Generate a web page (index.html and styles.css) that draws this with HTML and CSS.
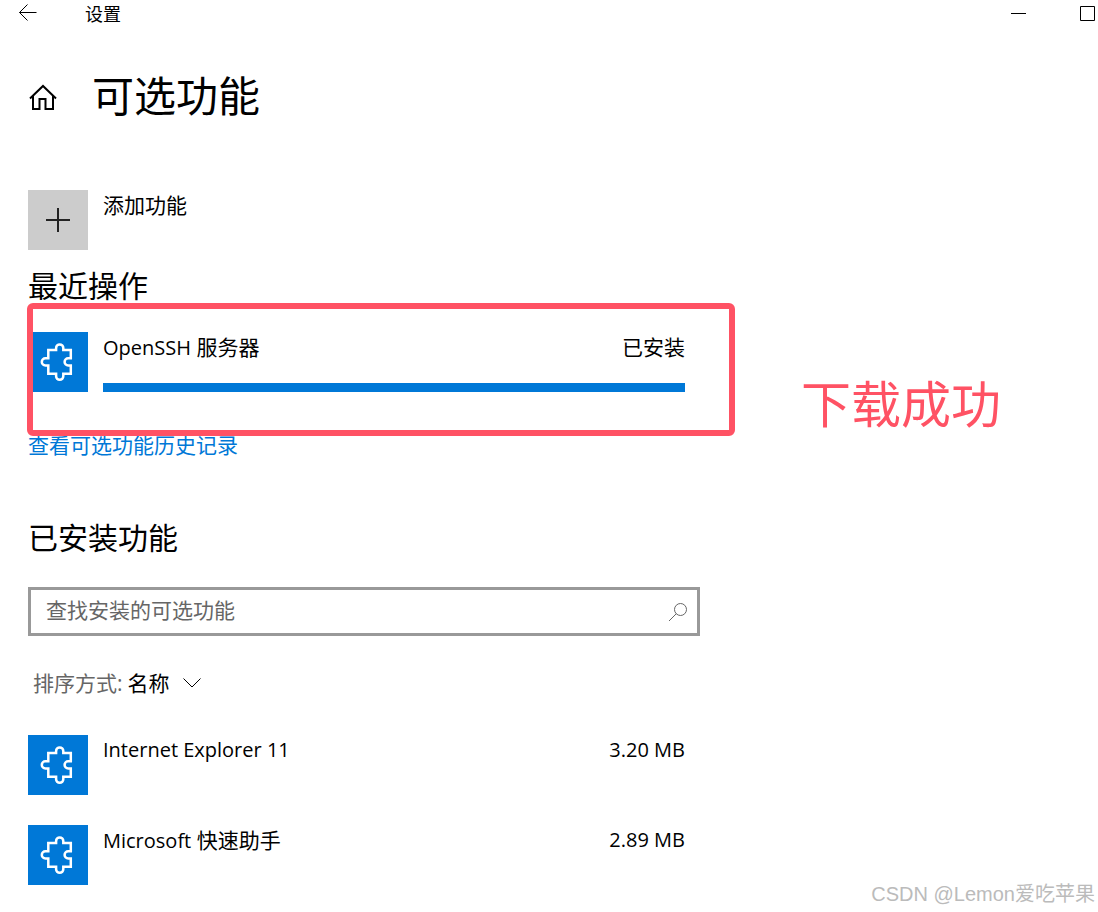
FILE: index.html
```html
<!DOCTYPE html>
<html lang="zh-CN">
<head>
    <meta charset="UTF-8">
    <meta name="viewport" content="width=device-width, initial-scale=1.0">
    <title>设置</title>
    <link rel="stylesheet" href="styles.css">
</head>
<body>
    <!-- Shared puzzle piece icon -->
    <svg class="sprite" aria-hidden="true">
        <symbol id="puzzle" viewBox="0 0 60 60">
            <path d="M20.300 18H28.100V16a3.600 3.600 0 0 1 7.200 0V18H42.800V26.300H40.200a3.600 3.600 0 0 0 0 7.200H42.800V41.800H35.300V44.200a3.600 3.600 0 0 1-7.200 0V41.800H20.300V33.500H17.400a3.600 3.600 0 0 1 0-7.200H20.300Z"/>
        </symbol>
    </svg>

    <div class="titlebar">
        <button class="back" aria-label="返回">
            <svg width="20" height="18" viewBox="0 0 20 18"><path d="M18.5 8.5H1.5M9.5 .5l-8 8 8 8"/></svg>
        </button>
        <span class="app-name">设置</span>
        <button class="minimize" aria-label="最小化">
            <svg width="15" height="15" viewBox="0 0 15 15"><path d="M0 7.5h15"/></svg>
        </button>
        <button class="maximize" aria-label="最大化">
            <svg width="15" height="15" viewBox="0 0 15 15"><path d="M.5 .5h14v14H.5z"/></svg>
        </button>
    </div>

    <main>
        <header>
            <a class="home" href="#" aria-label="主页">
                <svg width="30" height="30" viewBox="0 0 30 30"><path d="M2 17.500 15 5l13 12.500M5 15v13h6.500V18h6v10H25V15"/></svg>
            </a>
            <h1>可选功能</h1>
        </header>

        <button class="item add">
            <span class="tile plus">
                <svg width="24" height="24" viewBox="0 0 24 24"><path d="M12 0v24M0 12h24"/></svg>
            </span>
            <span class="name">添加功能</span>
        </button>

        <section class="recent">
            <h2>最近操作</h2>
            <div class="item marked">
                <span class="tile"><svg width="60" height="60"><use href="#puzzle"/></svg></span>
                <div class="details">
                    <div class="line">
                        <span class="name" id="recent-name"><span class="latin">OpenSSH</span> 服务器</span>
                        <span>已安装</span>
                    </div>
                    <progress value="100" max="100" aria-labelledby="recent-name"></progress>
                </div>
                <div class="frame"></div>
                <p class="note">下载成功</p>
            </div>
            <a class="history" href="#">查看可选功能历史记录</a>
        </section>

        <section class="installed">
            <h2>已安装功能</h2>
            <div class="search">
                <input type="text" placeholder="查找安装的可选功能" aria-label="查找安装的可选功能">
                <button aria-label="搜索">
                    <svg width="20" height="20" viewBox="0 0 20 20"><circle cx="12.500" cy="7.500" r="6"/><path d="M8.300 11.700 1 19"/></svg>
                </button>
            </div>
            <div class="sort">
                <label for="sort">排序方式:</label>
                <select id="sort">
                    <option>名称</option>
                </select>
                <svg width="18" height="10" viewBox="0 0 18 10"><path d="M.5 .5 9 9l8.500-8.500"/></svg>
            </div>
            <ul>
                <li class="item">
                    <span class="tile"><svg width="60" height="60"><use href="#puzzle"/></svg></span>
                    <div class="details line">
                        <span class="name latin">Internet Explorer 11</span>
                        <span class="latin">3.20 MB</span>
                    </div>
                </li>
                <li class="item">
                    <span class="tile"><svg width="60" height="60"><use href="#puzzle"/></svg></span>
                    <div class="details line">
                        <span class="name"><span class="latin">Microsoft</span> 快速助手</span>
                        <span class="latin">2.89 MB</span>
                    </div>
                </li>
            </ul>
        </section>
    </main>

    <p class="watermark">CSDN @Lemon爱吃苹果</p>
</body>
</html>
```

FILE: styles.css
```css
* {
    box-sizing: border-box;
}

body {
    position: relative;
    min-height: 100vh;
    margin: 0;
    background: #ffffff;
    color: #000000;
    font-family: "Open Sans", "Noto Sans CJK SC", sans-serif;
    font-size: 21px;
    line-height: 30px;
}

button, input, select {
    font: inherit;
    color: inherit;
    background: none;
    border: none;
    padding: 0;
}

svg {
    display: block;
    fill: none;
    stroke: #000000;
}

h1, h2, p, ul {
    margin: 0;
    padding: 0;
    font-weight: 400;
}

.sprite {
    position: absolute;
    width: 0;
    height: 0;
}

.latin {
    font-size: 20px;
}

/* Title bar */
.titlebar {
    display: flex;
    align-items: center;
    height: 28px;
    padding-left: 18px;
}

.titlebar button {
    padding-bottom: 2px;
}

.app-name {
    margin-left: 47px;
    margin-right: auto;
    font-size: 18px;
    line-height: 28px;
}

.minimize {
    margin: 0 27px;
}

.maximize {
    margin: 0 3px 0 27px;
}

/* Page */
main {
    max-width: 728px;
    padding: 41px 28px 27px;
}

header {
    display: flex;
    align-items: center;
    gap: 34px;
}

.home svg {
    stroke-width: 2;
}

h1 {
    font-size: 42px;
    line-height: 54px;
}

h2 {
    font-size: 30px;
    line-height: 38px;
}

.item {
    position: relative;
    display: flex;
    gap: 15px;
    padding-right: 15px;
}

.add {
    margin-top: 67px;
    text-align: left;
}

.tile {
    flex: none;
    width: 60px;
    height: 60px;
    background: #0078d7;
}

.tile svg {
    stroke: #ffffff;
    stroke-width: 2.5;
}

.plus {
    display: grid;
    place-items: center;
    background: #cccccc;
}

.plus svg {
    stroke: #222222;
    stroke-width: 2;
}

.details {
    flex: 1;
}

.line {
    display: flex;
    justify-content: space-between;
}

/* Recent actions */
.recent {
    margin-top: 17px;
}

.marked {
    margin: 27px 0 38px;
}

progress {
    display: block;
    width: 100%;
    height: 9px;
    margin-top: 20px;
    appearance: none;
    border: none;
}

progress::-webkit-progress-bar {
    background: #cccccc;
}

progress::-webkit-progress-value {
    background: #0078d7;
}

.frame {
    position: absolute;
    inset: -29px -35px -44px -1px;
    border: 6px solid #ff5264;
    border-radius: 6px;
    pointer-events: none;
}

.note {
    position: absolute;
    top: 42px;
    left: 773px;
    color: #ff5264;
    font-size: 50px;
    line-height: 60px;
    white-space: nowrap;
}

.history {
    display: block;
    color: #0078d7;
    text-decoration: none;
}

/* Installed features */
.installed {
    margin-top: 59px;
}

.search {
    display: flex;
    align-items: center;
    height: 49px;
    margin-top: 30px;
    padding: 0 9px 0 15px;
    border: 3px solid #999999;
}

.search input {
    flex: 1;
    min-width: 0;
    padding-bottom: 3px;
    outline: none;
}

.search input::placeholder {
    color: #666666;
}

.search svg {
    stroke: #666666;
}

.sort {
    display: flex;
    align-items: center;
    gap: 5px;
    height: 30px;
    margin: 32px 0 37px;
    padding-left: 5px;
}

.sort label {
    color: #666666;
}

.sort select {
    appearance: none;
    padding-right: 30px;
}

.sort svg {
    margin-left: -22px;
    pointer-events: none;
}

ul {
    display: grid;
    gap: 30px;
    list-style: none;
}

.watermark {
    position: absolute;
    right: 3px;
    bottom: 3px;
    color: #bbbbbb;
    font-family: "Liberation Sans", "Noto Sans CJK SC", sans-serif;
    font-size: 20px;
}
```
